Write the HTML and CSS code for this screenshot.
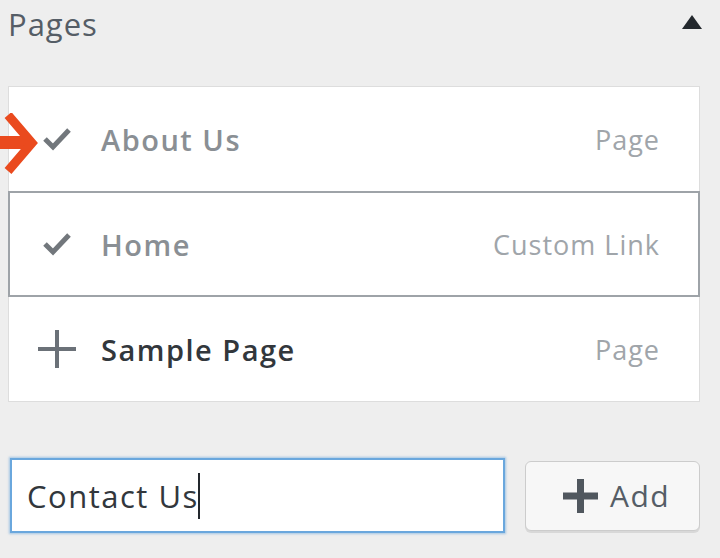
FILE: index.html
```html
<!DOCTYPE html>
<html>
<head>
<meta charset="utf-8">
<link rel="stylesheet" href="styles.css">
</head>
<body>
<div class="panel">
  <div class="header">
    <span class="title">Pages</span>
    <svg class="toggle" width="20" height="14" viewBox="0 0 20 14"><polygon points="0,14 10,0 20,14" fill="#23282d"/></svg>
  </div>
  <div class="list">
    <div class="row added">
      <span class="icon"><svg width="28" height="24" viewBox="0 0 28 24"><polyline points="2,12 10,20 26,3" fill="none" stroke="#72777c" stroke-width="5"/></svg></span>
      <span class="name">About Us</span>
      <span class="type">Page</span>
    </div>
    <div class="row added selected">
      <span class="icon"><svg width="28" height="24" viewBox="0 0 28 24"><polyline points="2,12 10,20 26,3" fill="none" stroke="#72777c" stroke-width="5"/></svg></span>
      <span class="name">Home</span>
      <span class="type">Custom Link</span>
    </div>
    <div class="row">
      <span class="icon"><svg width="38" height="38" viewBox="0 0 38 38"><path d="M19 0V38M0 19H38" stroke="#6b7178" stroke-width="4" fill="none"/></svg></span>
      <span class="name">Sample Page</span>
      <span class="type">Page</span>
    </div>
  </div>
  <div class="add-row">
    <div class="field"><span class="value">Contact Us</span><span class="caret"></span></div>
    <div class="button"><svg width="35" height="34" viewBox="0 0 35 34"><path d="M17.5 0V34M0 17H35" stroke="#50575e" stroke-width="7" fill="none"/></svg><span class="label">Add</span></div>
  </div>
  <svg class="pointer" width="40" height="64" viewBox="0 0 40 64"><rect x="0" y="23" width="30" height="13" fill="#ea4a1e"/><polyline points="8,2 32,30 8,58" fill="none" stroke="#ea4a1e" stroke-width="9" stroke-linejoin="miter"/></svg>
</div>
</body>
</html>
```
FILE: styles.css
```css
html, body {
  margin: 0;
  padding: 0;
  background: #eeeeee;
}
body {
  font-family: "Open Sans", "Noto Sans", sans-serif;
  width: 720px;
  height: 558px;
  overflow: hidden;
}
.panel {
  position: relative;
  padding: 0 20px 0 8px;
}
.header {
  display: flex;
  align-items: center;
  justify-content: space-between;
  height: 52px;
}
.title {
  font-size: 31px;
  letter-spacing: 1px;
  color: #555d66;
  line-height: 1;
  margin-top: -4px;
}
.toggle {
  margin-right: -2px;
  margin-top: -8px;
}
.list {
  margin-top: 34px;
  background: #fff;
  border: 1px solid #dddddd;
}
.row {
  display: flex;
  align-items: center;
  height: 104px;
  padding: 0 39px 0 28px;
  box-sizing: border-box;
}
.row.selected {
  border: 2px solid #9ea3a8;
  margin: 0 -1px;
  height: 106px;
  padding-left: 27px;
  padding-right: 38px;
}
.icon {
  width: 40px;
  display: flex;
  justify-content: center;
  margin-right: 24px;
}
.name {
  flex: 1;
  font-size: 29px;
  letter-spacing: 1.5px;
  font-weight: 600;
  color: #32373c;
}
.added .name {
  color: #8a8f94;
}
.type {
  font-size: 27px;
  letter-spacing: 1px;
  color: #a0a5aa;
}
.add-row {
  display: flex;
  align-items: center;
  margin-top: 56px;
  padding-left: 2px;
  gap: 20px;
}
.field {
  width: 496px;
  height: 75px;
  box-sizing: border-box;
  background: #fff;
  border: 2px solid #6aa7dd;
  box-shadow: 0 0 2px 1px rgba(91, 157, 217, 0.5);
  display: flex;
  align-items: center;
  padding-left: 15px;
}
.value {
  font-size: 31px;
  letter-spacing: 1.5px;
  color: #32373c;
  margin-right: -1px;
}
.caret {
  width: 2px;
  height: 46px;
  background: #23282d;
}
.button {
  width: 175px;
  height: 70px;
  box-sizing: border-box;
  background: #f7f7f7;
  border: 1px solid #cccccc;
  border-radius: 6px;
  box-shadow: 0 2px 0 #d8d8d8;
  display: flex;
  align-items: center;
  justify-content: center;
  gap: 12px;
  font-size: 30px;
  color: #555d66;
  padding-left: 8px;
}
.label {
  letter-spacing: 1.5px;
}
.pointer {
  position: absolute;
  left: 0;
  top: 113px;
}
```
